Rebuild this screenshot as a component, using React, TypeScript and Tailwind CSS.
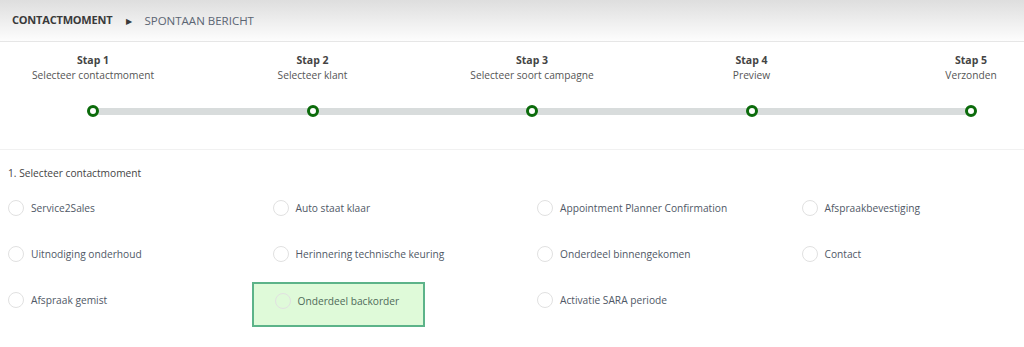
const steps = [
  { title: 'Stap 1', label: 'Selecteer contactmoment' },
  { title: 'Stap 2', label: 'Selecteer klant' },
  { title: 'Stap 3', label: 'Selecteer soort campagne' },
  { title: 'Stap 4', label: 'Preview' },
  { title: 'Stap 5', label: 'Verzonden' },
];

const options = [
  'Service2Sales',
  'Auto staat klaar',
  'Appointment Planner Confirmation',
  'Afspraakbevestiging',
  'Uitnodiging onderhoud',
  'Herinnering technische keuring',
  'Onderdeel binnengekomen',
  'Contact',
  'Afspraak gemist',
  'Onderdeel backorder',
  'Activatie SARA periode',
];

const selected = 'Onderdeel backorder';

export default function App() {
  return (
    <div className="w-[1024px] h-[347px] overflow-hidden bg-white font-['Open_Sans',sans-serif]">
      {/* breadcrumb header */}
      <div className="h-[42px] flex items-center px-3 border-b border-[#e6e6e6] bg-gradient-to-b from-[#dedede] to-[#fdfdfd]">
        <span className="text-[11px] font-bold text-[#3a3a3a] tracking-[-0.2px]">CONTACTMOMENT</span>
        <span className="ml-[14px] text-[8px] text-[#3a3a3a]">&#9654;</span>
        <span className="ml-[12px] text-[11.5px] text-[#5b6573]">SPONTAAN BERICHT</span>
      </div>

      {/* stepper */}
      <div className="h-[108px] border-b border-[#f1f1f1]">
        <div className="relative ml-[93px] mr-[53px] pt-[11px]">
          <div className="flex justify-between">
            {steps.map((s) => (
              <div key={s.title} className="w-0 flex flex-col items-center whitespace-nowrap">
                <div className="text-[10.5px] font-bold text-[#444] leading-[15px]">{s.title}</div>
                <div className="text-[10.2px] text-[#555] leading-[15px]">{s.label}</div>
              </div>
            ))}
          </div>
          <div className="mt-[22px] relative h-[12px] flex items-center">
            <div className="absolute left-0 right-0 h-[7px] bg-[#d8dcdc]" />
            <div className="relative w-full flex justify-between">
              {steps.map((s) => (
                <div key={s.title} className="w-0 flex justify-center">
                  <div className="shrink-0 w-[12px] h-[12px] rounded-full border-[3px] border-[#0b6b0b] bg-white" />
                </div>
              ))}
            </div>
          </div>
        </div>
      </div>

      {/* options */}
      <div className="pl-[8px] pt-[16px]">
        <div className="text-[10.2px] text-[#444] leading-[15px]">1. Selecteer contactmoment</div>
        <div className="mt-[15px] grid grid-cols-[repeat(4,264.5px)] gap-y-[22px]">
          {options.map((o) => {
            const isSel = o === selected;
            return (
              <div key={o} className="flex">
                <div
                  className={
                    isSel
                      ? '-ml-[21px] -mt-[6px] -mb-[15px] pl-[21px] pr-[24px] pt-[4px] pb-[11px] flex items-center border-2 border-[#5cb389] bg-[#dffad9]'
                      : 'flex items-center'
                  }
                >
                  <div className="w-[16px] h-[16px] rounded-full border border-[#e1e1e1]" />
                  <span className={`ml-[7px] text-[10.2px] leading-[24px] ${isSel ? 'text-[#4f6a5a]' : 'text-[#4f5866]'}`}>{o}</span>
                </div>
              </div>
            );
          })}
        </div>
      </div>
    </div>
  );
}
